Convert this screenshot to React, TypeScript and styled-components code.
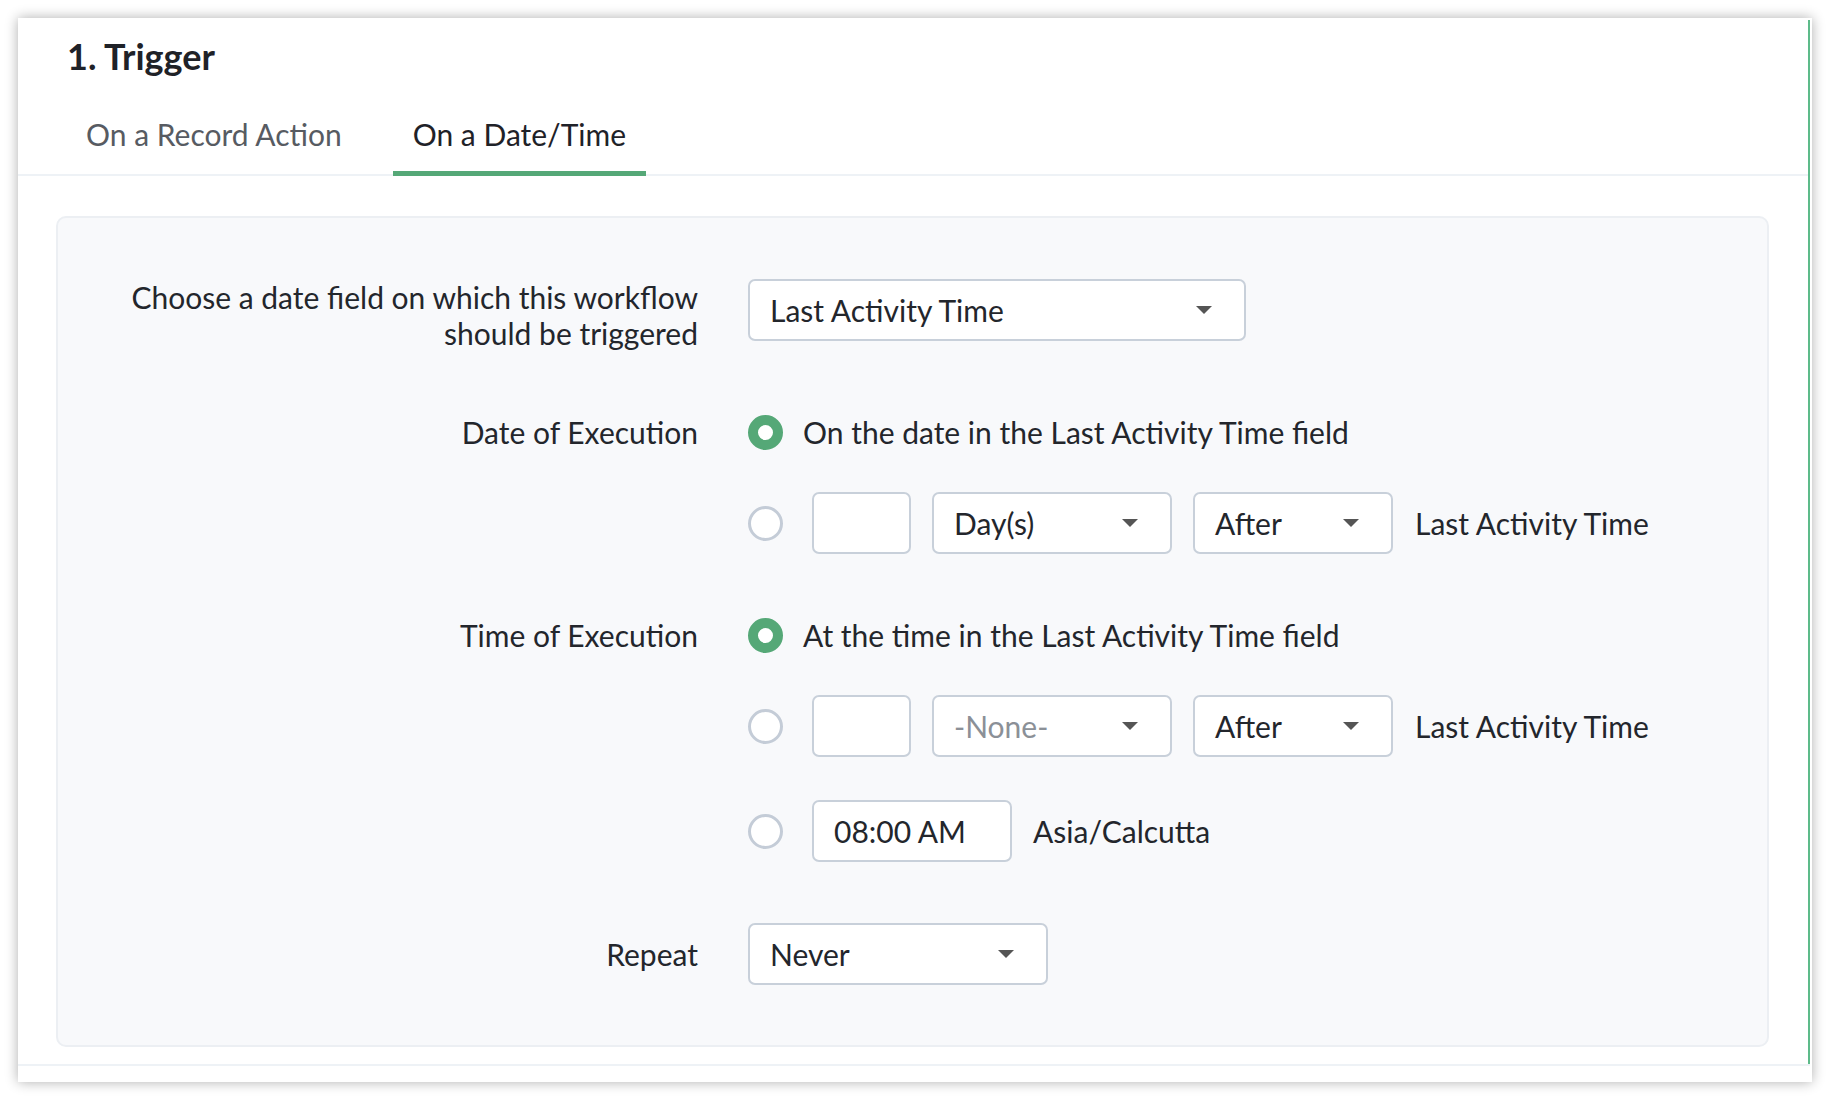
import React from "react";
import styled, { createGlobalStyle } from "styled-components";

const Global = createGlobalStyle`
  html, body { margin: 0; padding: 0; background: #ffffff; }
  body { font-family: Lato, "Liberation Sans", Arial, sans-serif; color: #23262c; }
  * { box-sizing: border-box; }
`;

const Page = styled.div`
  width: 1830px;
  height: 1100px;
  padding: 18px;
`;

const Card = styled.div`
  width: 1794px;
  height: 1064px;
  background: #ffffff;
  box-shadow: 0 0 12px rgba(0, 0, 0, 0.32);
  padding: 2px 2px 0 0;
  display: flex;
  flex-direction: column;
`;

const Main = styled.div`
  border-right: 2px solid #5dbb8a;
  display: flex;
  flex-direction: column;
`;

const Header = styled.div`
  padding: 16px 0 0 0;
`;

const Title = styled.h2`
  margin: 0 0 0 49px;
  font-size: 36px;
  line-height: 40px;
  font-weight: 700;
  color: #1f2228;
`;

const TabBar = styled.div`
  margin-top: 40px;
  display: flex;
  gap: 31px;
  padding-left: 48px;
  border-bottom: 2px solid #eef2f6;
`;

const Tab = styled.div<{ $active?: boolean }>`
  padding: 0 20px 19px;
  margin-bottom: -2px;
  font-size: 30px;
  line-height: 36px;
  color: ${(p) => (p.$active ? "#1f2228" : "#575b62")};
  border-bottom: 5px solid ${(p) => (p.$active ? "#55a877" : "transparent")};
`;

const Body = styled.div`
  padding: 40px 39px 17px 38px;
`;

const Panel = styled.div`
  background: #f8f9fb;
  border: 2px solid #eceff3;
  border-radius: 10px;
  padding: 61px 0 60px 0;
  display: flex;
  flex-direction: column;
`;

const FormRow = styled.div<{ $top: number }>`
  display: grid;
  grid-template-columns: 640px 1fr;
  column-gap: 50px;
  align-items: start;
  margin-top: ${(p) => p.$top}px;
`;

const Label = styled.div<{ $multi?: boolean }>`
  text-align: right;
  font-size: 30px;
  line-height: ${(p) => (p.$multi ? "36px" : "62px")};
  color: #23262c;
`;

const Options = styled.div`
  display: flex;
  flex-direction: column;
`;

const OptionLine = styled.div<{ $top?: number }>`
  display: flex;
  align-items: center;
  height: 62px;
  margin-top: ${(p) => p.$top ?? 0}px;
  font-size: 30px;
  color: #23262c;
`;

const Radio = styled.span<{ $checked?: boolean; $gap: number }>`
  flex: none;
  width: 35px;
  height: 35px;
  border-radius: 50%;
  margin-right: ${(p) => p.$gap}px;
  background: #ffffff;
  border: ${(p) => (p.$checked ? "10px solid #55a877" : "3px solid #c4ccd7")};
`;

const SelectBox = styled.div<{ $w: number; $placeholder?: boolean }>`
  flex: none;
  width: ${(p) => p.$w}px;
  height: 62px;
  background: #ffffff;
  border: 2px solid #c8d0da;
  border-radius: 7px;
  display: flex;
  align-items: center;
  justify-content: space-between;
  padding: 0 32px 0 20px;
  font-size: 30px;
  color: ${(p) => (p.$placeholder ? "#8b9097" : "#23262c")};
`;

const InputBox = styled.div<{ $w: number }>`
  flex: none;
  width: ${(p) => p.$w}px;
  height: 62px;
  background: #ffffff;
  border: 2px solid #c8d0da;
  border-radius: 7px;
  display: flex;
  align-items: center;
  padding: 0 20px;
  font-size: 30px;
  color: #23262c;
`;

const Controls = styled.div`
  display: flex;
  align-items: center;
  gap: 21px;
`;

const Spacer = styled.span<{ $w: number }>`
  display: inline-block;
  width: ${(p) => p.$w}px;
`;

const Footer = styled.div`
  border-top: 2px solid #eef2f6;
  flex: 1;
`;

const Caret = () => (
  <svg width="16" height="8" viewBox="0 0 16 8">
    <path d="M0 0h16L8 8z" fill="#555555" />
  </svg>
);

const Select: React.FC<{ w: number; value: string; placeholder?: boolean }> = ({ w, value, placeholder }) => (
  <SelectBox $w={w} $placeholder={placeholder}>
    <span>{value}</span>
    <Caret />
  </SelectBox>
);

export default function App() {
  return (
    <>
      <Global />
      <Page>
        <Card>
          <Main>
            <Header>
              <Title>1. Trigger</Title>
              <TabBar>
                <Tab>On a Record Action</Tab>
                <Tab $active>On a Date/Time</Tab>
              </TabBar>
            </Header>
            <Body>
              <Panel>
                <FormRow $top={0}>
                  <Label $multi>
                    Choose a date field on which this workflow
                    <br />
                    should be triggered
                  </Label>
                  <Options>
                    <Select w={498} value="Last Activity Time" />
                  </Options>
                </FormRow>

                <FormRow $top={50}>
                  <Label>Date of Execution</Label>
                  <Options>
                    <OptionLine>
                      <Radio $checked $gap={20} />
                      On the date in the Last Activity Time field
                    </OptionLine>
                    <OptionLine $top={29}>
                      <Radio $gap={29} />
                      <Controls>
                        <InputBox $w={99} />
                        <Select w={240} value="Day(s)" />
                        <Select w={200} value="After" />
                        <Spacer $w={1} />
                      </Controls>
                      <span>Last Activity Time</span>
                    </OptionLine>
                  </Options>
                </FormRow>

                <FormRow $top={50}>
                  <Label>Time of Execution</Label>
                  <Options>
                    <OptionLine>
                      <Radio $checked $gap={20} />
                      At the time in the Last Activity Time field
                    </OptionLine>
                    <OptionLine $top={29}>
                      <Radio $gap={29} />
                      <Controls>
                        <InputBox $w={99} />
                        <Select w={240} value="-None-" placeholder />
                        <Select w={200} value="After" />
                        <Spacer $w={1} />
                      </Controls>
                      <span>Last Activity Time</span>
                    </OptionLine>
                    <OptionLine $top={43}>
                      <Radio $gap={29} />
                      <Controls>
                        <InputBox $w={200}>08:00 AM</InputBox>
                        <Spacer $w={0} />
                      </Controls>
                      <span>Asia/Calcutta</span>
                    </OptionLine>
                  </Options>
                </FormRow>

                <FormRow $top={61}>
                  <Label>Repeat</Label>
                  <Options>
                    <Select w={300} value="Never" />
                  </Options>
                </FormRow>
              </Panel>
            </Body>
          </Main>
          <Footer />
        </Card>
      </Page>
    </>
  );
}
